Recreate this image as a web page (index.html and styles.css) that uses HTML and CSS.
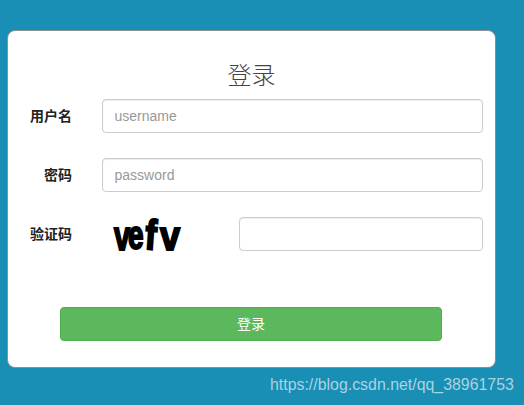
FILE: index.html
```html
<!DOCTYPE html>
<html lang="zh">
<head>
<meta charset="utf-8">
<title>登录</title>
<link rel="stylesheet" href="styles.css">
</head>
<body>
<form class="card">
  <h2 class="title">登录</h2>
  <div class="row">
    <label class="label">用户名</label>
    <input class="field" type="text" placeholder="username">
  </div>
  <div class="row">
    <label class="label">密码</label>
    <input class="field" type="password" placeholder="password">
  </div>
  <div class="row">
    <label class="label">验证码</label>
    <div class="captcha"><span class="c c1">v</span><span class="c c2">e</span><span class="c c3">f</span><span class="c c4">v</span></div>
    <input class="field" type="text">
  </div>
  <button class="submit" type="button">登录</button>
</form>
<footer class="mark">https://blog.csdn.net/qq_38961753</footer>
</body>
</html>
```
FILE: styles.css
```css
* { box-sizing: border-box; }
html, body { height: 100%; }
body {
  margin: 0;
  padding: 30px 0 0 7px;
  background: #1a8fb5;
  font-family: "Liberation Sans", "Noto Sans CJK SC", sans-serif;
  font-size: 14px;
  color: #333;
  overflow: hidden;
  position: relative;
}
.card {
  width: 489px;
  height: 338px;
  background: #fff;
  border: 1px solid #8a8f92;
  border-radius: 8px;
  padding: 30px 12px 0 0;
  display: flex;
  flex-direction: column;
}
.title {
  margin: 0 0 8px;
  height: 30px;
  padding-left: 12px;
  font-size: 24px;
  line-height: 30px;
  font-weight: 300;
  text-align: center;
  color: #444;
}
.row {
  display: flex;
  align-items: center;
  height: 34px;
  margin-bottom: 25px;
}
.label {
  width: 64px;
  margin-right: 30px;
  padding-bottom: 3px;
  text-align: right;
  font-weight: 700;
  font-size: 14px;
  color: #222;
}
.field {
  flex: 1;
  min-width: 0;
  height: 34px;
  padding: 6px 12px 6px 11.5px;
  border: 1px solid #ccc;
  border-radius: 4px;
  background: #fff;
  font: 14px "Liberation Sans", sans-serif;
  color: #555;
  box-shadow: inset 0 1px 1px rgba(0,0,0,.075);
}
.field::placeholder { color: #999; opacity: 1; }
.captcha {
  flex: none;
  width: 137px;
  height: 34px;
  padding-left: 11px;
  display: flex;
  align-items: flex-end;
  font: 700 40px/34px "Liberation Sans", sans-serif;
  color: #000;
  -webkit-text-stroke: 2px #000;
}
.c { display: block; transform-origin: 0 100%; }
.c1 { width: 15px; transform: translate(1px, 2px) scaleX(.72); }
.c2 { width: 15px; transform: translate(0, 1px) scaleX(.7); }
.c3 { width: 13px; transform: translate(1px, 1px) scale(.85, 1.06) rotate(5deg); margin-right: 5px; }
.c4 { width: 20px; transform: translate(-1px, 2px) scaleX(.9); }
.submit {
  align-self: flex-start;
  width: 382px;
  height: 34px;
  margin: 31px 0 0 52px;
  padding: 0 0 3px;
  background: #5cb85c;
  border: 1px solid #4cae4c;
  border-radius: 4px;
  color: #fff;
  font: 14px "Liberation Sans", "Noto Sans CJK SC", sans-serif;
}
.mark {
  position: absolute;
  left: 270px;
  top: 375px;
  font-size: 15.9px;
  line-height: 20px;
  color: #a9d3e1;
}
```
